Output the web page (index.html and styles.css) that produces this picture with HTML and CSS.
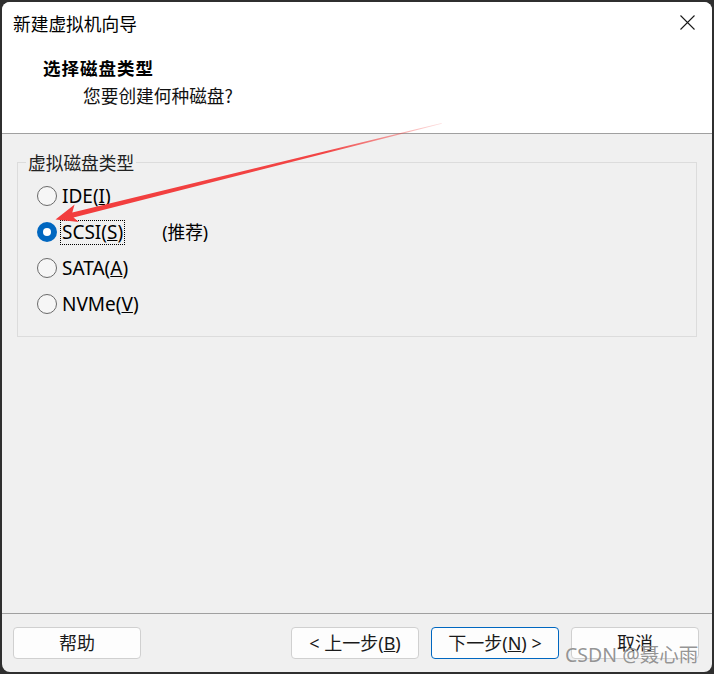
FILE: index.html
```html
<!DOCTYPE html>
<html lang="zh-CN">
<head>
<meta charset="utf-8">
<title>新建虚拟机向导</title>
<link rel="stylesheet" href="styles.css">
</head>
<body>
<div class="window">
  <div class="titlebar">
    <span class="title">新建虚拟机向导</span>
    <svg class="close" viewBox="0 0 15 15" aria-hidden="true"><path d="M0.5 0.5 L14.5 14.5 M14.5 0.5 L0.5 14.5"/></svg>
  </div>
  <div class="header">
    <div class="heading">选择磁盘类型</div>
    <div class="subheading">您要创建何种磁盘?</div>
  </div>
  <div class="content">
    <fieldset class="group">
      <legend>虚拟磁盘类型</legend>
      <div class="radio-list">
        <div class="radio"><span class="dot"></span><span class="label">IDE(<u>I</u>)</span></div>
        <div class="radio checked"><span class="dot"></span><span class="label focus">SCSI(<u>S</u>)</span><span class="note">(推荐)</span></div>
        <div class="radio"><span class="dot"></span><span class="label">SATA(<u>A</u>)</span></div>
        <div class="radio"><span class="dot"></span><span class="label">NVMe(<u>V</u>)</span></div>
      </div>
    </fieldset>
  </div>
  <div class="footer">
    <button class="btn">帮助</button>
    <div class="spacer"></div>
    <button class="btn">&lt; 上一步(<u>B</u>)</button>
    <button class="btn primary">下一步(<u>N</u>) &gt;</button>
    <button class="btn">取消</button>
  </div>
  <div class="watermark">CSDN @聂心雨</div>
</div>
<svg class="arrow" viewBox="0 0 714 674" aria-hidden="true">
  <defs>
    <linearGradient id="fade" gradientUnits="userSpaceOnUse" x1="441.7" y1="123.3" x2="55.5" y2="219.5">
      <stop offset="0" stop-color="#f23c3c" stop-opacity="0.15"/>
      <stop offset="0.3" stop-color="#f23c3c" stop-opacity="0.95"/>
      <stop offset="1" stop-color="#f23c3c" stop-opacity="1"/>
    </linearGradient>
  </defs>
  <polygon fill="url(#fade)" points="55.5,219.5 74.6,204.6 72.3,212.5 441.6,122.9 441.8,123.7 73.5,217.4 78.9,222.1"/>
</svg>
</body>
</html>
```
FILE: styles.css
```css
html, body {
  margin: 0;
  height: 100%;
}
body {
  background: #2f2f2f;
  font-family: "Noto Sans", "Noto Sans CJK SC", sans-serif;
  color: #000;
  position: relative;
  overflow: hidden;
}
.window {
  position: relative;
  margin: 2px 2px 0 2px;
  width: 710px;
  height: 670px;
  border-radius: 8px;
  overflow: hidden;
  background: #f0f0f0;
  display: flex;
  flex-direction: column;
}
.titlebar {
  height: 39px;
  flex: none;
  background: #fff;
  display: flex;
  align-items: center;
  justify-content: space-between;
  padding: 0 17px 0 11px;
}
.title {
  font-family: "Noto Sans CJK SC", sans-serif;
  font-size: 17.7px;
  line-height: 24px;
  padding-top: 2px;
}
.close {
  width: 15px;
  height: 15px;
  margin-top: 2px;
}
.close path {
  stroke: #1a1a1a;
  stroke-width: 1.1;
  fill: none;
}
.header {
  flex: none;
  height: 93px;
  box-sizing: border-box;
  background: #fff;
  border-bottom: 1px solid #a0a0a0;
  padding: 15px 0 0 41px;
}
.heading {
  font-family: "Noto Sans CJK SC", sans-serif;
  font-weight: 700;
  font-size: 17.5px;
  letter-spacing: 1px;
  line-height: 24px;
}
.subheading {
  font-family: "Noto Sans CJK SC", sans-serif;
  font-size: 17.7px;
  line-height: 24px;
  margin: 3px 0 0 40px;
  color: #111;
}
.content {
  flex: 1;
  min-height: 0;
}
.group {
  margin: 18px 15px 0 15px;
  padding: 0 0 14px 0;
  border: 1px solid #dcdcdc;
  min-width: 0;
}
.group legend {
  margin-left: 8px;
  padding: 0 2px;
  font-family: "Noto Sans CJK SC", sans-serif;
  font-size: 17.7px;
  line-height: 20px;
  color: #222;
}
.radio-list {
  padding-top: 6px;
  display: flex;
  flex-direction: column;
}
.radio {
  height: 36px;
  display: flex;
  align-items: center;
  padding-left: 19px;
}
.dot {
  width: 20px;
  height: 20px;
  box-sizing: border-box;
  border-radius: 50%;
  border: 1px solid #6a6a6a;
  background: #f6f6f6;
  flex: none;
  display: flex;
  align-items: center;
  justify-content: center;
}
.radio.checked .dot {
  border: none;
  background: #0067c0;
}
.radio.checked .dot::after {
  content: "";
  width: 8px;
  height: 8px;
  border-radius: 50%;
  background: #fff;
}
.label {
  margin-left: 4px;
  padding: 0 1px;
  font-size: 19px;
  line-height: 23px;
}
.label.focus {
  outline: 1px dotted #000;
  outline-offset: 0;
}
.note {
  margin-left: 38px;
  font-size: 17.7px;
  line-height: 23px;
}
.footer {
  flex: none;
  height: 59px;
  box-sizing: border-box;
  border-top: 1px solid #a0a0a0;
  padding: 13px 13px 0 11px;
  display: flex;
  align-items: flex-start;
  gap: 12px;
}
.spacer {
  flex: 1;
}
.btn {
  width: 128px;
  height: 32px;
  box-sizing: border-box;
  border: 1px solid #d0d0d0;
  border-radius: 4px;
  background: #fdfdfd;
  font-family: "Noto Sans", "Noto Sans CJK SC", sans-serif;
  font-size: 18px;
  line-height: 28px;
  color: #1a1a1a;
  padding: 0;
  display: flex;
  align-items: center;
  justify-content: center;
}
.btn.primary {
  border-color: #0067c0;
}
.watermark {
  position: absolute;
  left: 563px;
  top: 640px;
  font-size: 19.5px;
  line-height: 26px;
  color: rgba(130, 130, 130, 0.85);
  text-shadow: 0 0 1px rgba(255, 255, 255, 0.6);
  white-space: nowrap;
}
.arrow {
  position: absolute;
  left: 0;
  top: 0;
  width: 714px;
  height: 674px;
  pointer-events: none;
}
```
